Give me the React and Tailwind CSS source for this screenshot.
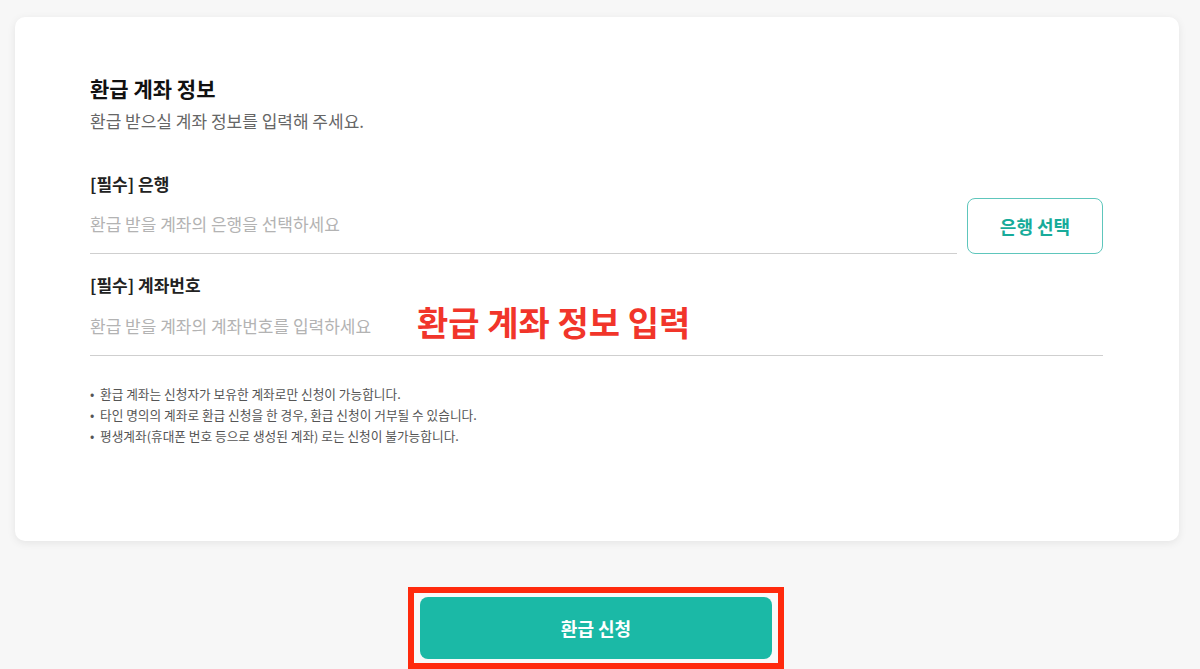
const notes = [
  '환급 계좌는 신청자가 보유한 계좌로만 신청이 가능합니다.',
  '타인 명의의 계좌로 환급 신청을 한 경우, 환급 신청이 거부될 수 있습니다.',
  '평생계좌(휴대폰 번호 등으로 생성된 계좌) 로는 신청이 불가능합니다.',
]

export default function App() {
  return (
    <div className="h-[669px] overflow-hidden bg-[#f7f7f7] pl-[15px] pr-[21px] pt-[17px] font-['Noto_Sans_CJK_KR','Noto_Sans',sans-serif] text-[#222]">
      <section className="rounded-[10px] bg-white pb-[95px] pl-[75px] pr-[76px] pt-[57px] shadow-[0_2px_8px_rgba(0,0,0,0.08)]">
        <h2 className="text-[21px] font-bold leading-[28px] text-[#111]">환급 계좌 정보</h2>
        <p className="mt-[7px] text-[17px] leading-[24px] text-[#666]">
          환급 받으실 계좌 정보를 입력해 주세요.
        </p>

        <label className="mt-[39px] block text-[17px] font-bold leading-[24px] text-[#222]">
          [필수] 은행
        </label>
        <div className="mt-[2px] flex items-end gap-[10px]">
          <div className="flex h-[56px] flex-1 items-center border-b border-[#cfcfcf] pb-[4px] text-[17px] text-[#b3b3b3]">
            환급 받을 계좌의 은행을 선택하세요
          </div>
          <button className="h-[56px] w-[136px] rounded-[8px] border border-[#5ec6bc] text-[18px] font-bold text-[#17ab9a]">
            은행 선택
          </button>
        </div>

        <label className="mt-[19px] block text-[17px] font-bold leading-[24px] text-[#222]">
          [필수] 계좌번호
        </label>
        <div className="relative mt-[2px] flex h-[57px] items-center border-b border-[#cfcfcf] pb-[2px] text-[17px] text-[#b3b3b3]">
          환급 받을 계좌의 계좌번호를 입력하세요
          <span className="absolute left-[327px] top-[3px] text-[34px] font-bold leading-[40px] text-[#f1352a]">
            환급 계좌 정보 입력
          </span>
        </div>

        <ul className="mt-[27px] text-[12.7px] leading-[21px] text-[#555]">
          {notes.map((n) => (
            <li key={n} className="flex">
              <span className="w-[10px] shrink-0">•</span>
              <span>{n}</span>
            </li>
          ))}
        </ul>
      </section>

      <div className="mt-[46px] flex justify-center pr-[2px]">
        <div className="border-[6px] border-[#ff2a0d] bg-[#f9f9f9] px-[6px] pb-[4px] pt-[4px]">
          <button className="block h-[62px] w-[352px] rounded-[8px] bg-[#1bb9a6] text-[18px] font-bold text-white">
            환급 신청
          </button>
        </div>
      </div>
    </div>
  )
}
